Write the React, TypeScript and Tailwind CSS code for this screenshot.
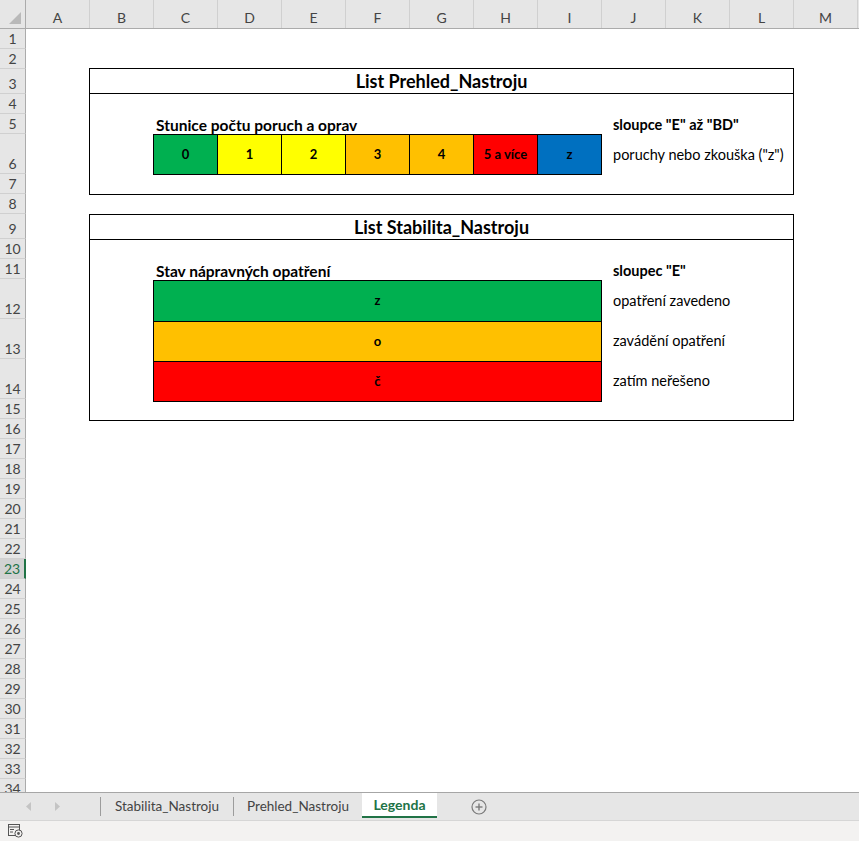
const cols = ['A', 'B', 'C', 'D', 'E', 'F', 'G', 'H', 'I', 'J', 'K', 'L', 'M'];

const heightClass: Record<number, string> = {
  20: 'h-[20px]',
  25: 'h-[25px]',
  40: 'h-[40px]',
};

const rowHeights = [20, 20, 25, 20, 20, 40, 20, 20, 25, 20, 20, 40, 40, 40, ...Array(20).fill(20)];

const scale = [
  { label: '0', color: 'bg-[#00b050]' },
  { label: '1', color: 'bg-[#ffff00]' },
  { label: '2', color: 'bg-[#ffff00]' },
  { label: '3', color: 'bg-[#ffc000]' },
  { label: '4', color: 'bg-[#ffc000]' },
  { label: '5 a více', color: 'bg-[#ff0000]' },
  { label: 'z', color: 'bg-[#0070c0]' },
];

const stav = [
  { label: 'z', color: 'bg-[#00b050]', note: 'opatření zavedeno' },
  { label: 'o', color: 'bg-[#ffc000]', note: 'zavádění opatření' },
  { label: 'č', color: 'bg-[#ff0000]', note: 'zatím neřešeno' },
];

function Corner() {
  return (
    <div className="w-[26px] h-full border-r border-[#ababab] flex items-end justify-end shrink-0">
      <svg width="14" height="14" viewBox="0 0 14 14" className="mb-[3px] mr-[3px]">
        <polygon points="13,1 13,13 1,13" fill="#b9b9b9" />
      </svg>
    </div>
  );
}

export default function App() {
  return (
    <div className="w-[859px] h-[841px] overflow-hidden flex flex-col bg-white font-['Lato',sans-serif] text-black">
      {/* column headers */}
      <div className="h-[29px] flex bg-[#e6e6e6] border-b border-[#ababab] shrink-0">
        <Corner />
        {cols.map((c) => (
          <div
            key={c}
            className="w-[64px] shrink-0 border-r border-[#d0d0d0] flex items-end justify-center pb-[2px] text-[14px] leading-[16px] text-[#444]"
          >
            {c}
          </div>
        ))}
      </div>

      {/* sheet */}
      <div className="flex-1 flex overflow-hidden">
        <div className="w-[26px] shrink-0 bg-[#e6e6e6] flex flex-col">
          {rowHeights.map((h, i) => {
            const selected = i + 1 === 23;
            return (
              <div
                key={i}
                className={`${heightClass[h]} shrink-0 flex items-end justify-center pb-[1px] border-b border-[#d0d0d0] text-[14px] leading-[16px] ${
                  selected
                    ? 'bg-[#d2d2d2] text-[#217346] border-r-2 border-r-[#217346]'
                    : 'text-[#444] border-r border-r-[#ababab]'
                }`}
              >
                {i + 1}
              </div>
            );
          })}
        </div>

        <div className="flex-1 pt-[39px] pl-[63px]">
          {/* List Prehled_Nastroju */}
          <div className="w-[705px] border border-black">
            <div className="h-[25px] border-b border-black flex items-center justify-center text-[18px] font-bold">
              List Prehled_Nastroju
            </div>
            <div className="h-[100px] pl-[63px] pt-[20px]">
              <div className="h-[20px] flex items-end font-bold leading-[18px]">
                <span className="w-[460px] pl-[3px] text-[15.5px]">Stunice počtu poruch a oprav</span>
                <span className="text-[14.5px]">sloupce "E" až "BD"</span>
              </div>
              <div className="flex items-center">
                <div className="flex border-l border-y border-black h-[41px]">
                  {scale.map((s) => (
                    <div
                      key={s.label}
                      className={`w-[64px] border-r border-black flex items-center justify-center text-[13px] font-bold ${s.color}`}
                    >
                      {s.label}
                    </div>
                  ))}
                </div>
                <span className="ml-[11px] text-[14.5px]">poruchy nebo zkouška ("z")</span>
              </div>
            </div>
          </div>

          {/* List Stabilita_Nastroju */}
          <div className="w-[705px] border border-black mt-[19px]">
            <div className="h-[25px] border-b border-black flex items-center justify-center text-[18px] font-bold">
              List Stabilita_Nastroju
            </div>
            <div className="h-[180px] pl-[63px] pt-[20px]">
              <div className="h-[20px] flex items-end font-bold leading-[18px]">
                <span className="w-[460px] pl-[3px] text-[15.5px]">Stav nápravných opatření</span>
                <span className="text-[14.5px]">sloupec "E"</span>
              </div>
              <div className="flex">
                <div className="w-[449px] border border-black">
                  {stav.map((s, i) => (
                    <div
                      key={s.label}
                      className={`h-[40px] flex items-center justify-center text-[13px] font-bold ${s.color} ${
                        i > 0 ? 'border-t border-black' : ''
                      }`}
                    >
                      {s.label}
                    </div>
                  ))}
                </div>
                <div className="pt-[1px]">
                  {stav.map((s) => (
                    <div key={s.note} className="h-[40px] flex items-center pl-[11px] text-[14.5px]">
                      {s.note}
                    </div>
                  ))}
                </div>
              </div>
            </div>
          </div>
        </div>
      </div>

      {/* sheet tabs */}
      <div className="h-[28px] shrink-0 bg-[#e6e6e6] border-t border-[#a6a6a6] flex items-stretch text-[13.5px] text-[#444]">
        <div className="w-[100px] flex items-center">
          <svg width="6" height="9" viewBox="0 0 6 9" className="ml-[26px]">
            <polygon points="5,0 5,9 0,4.5" fill="#c4c4c4" />
          </svg>
          <svg width="6" height="9" viewBox="0 0 6 9" className="ml-[23px]">
            <polygon points="0,0 0,9 5,4.5" fill="#c4c4c4" />
          </svg>
        </div>
        <div className="w-px my-[4px] bg-[#9c9c9c]" />
        <div className="w-[132px] flex items-center justify-center">Stabilita_Nastroju</div>
        <div className="w-px my-[4px] bg-[#9c9c9c]" />
        <div className="w-[128px] flex items-center justify-center">Prehled_Nastroju</div>
        <div className="w-[75px] mb-[2px] bg-white border-b-2 border-[#217346] flex items-center justify-center font-bold text-[14px] text-[#217346]">
          Legenda
        </div>
        <div className="flex items-center ml-[34px]">
          <svg width="16" height="16" viewBox="0 0 16 16">
            <circle cx="8" cy="8" r="7" fill="none" stroke="#7a7a7a" strokeWidth="1.2" />
            <line x1="4.5" y1="8" x2="11.5" y2="8" stroke="#7a7a7a" strokeWidth="1.4" />
            <line x1="8" y1="4.5" x2="8" y2="11.5" stroke="#7a7a7a" strokeWidth="1.4" />
          </svg>
        </div>
      </div>

      {/* status bar */}
      <div className="h-[21px] shrink-0 bg-[#f3f2f1] border-t border-[#d6d6d6] flex items-center pl-[8px]">
        <svg width="15" height="14" viewBox="0 0 15 14">
          <rect x="0.5" y="0.5" width="11" height="11" fill="none" stroke="#555" />
          <line x1="0.5" y1="3" x2="11.5" y2="3" stroke="#555" />
          <line x1="2" y1="5.5" x2="6" y2="5.5" stroke="#555" />
          <line x1="2" y1="8" x2="5" y2="8" stroke="#555" />
          <circle cx="10.5" cy="9.5" r="3.6" fill="#f3f2f1" stroke="#555" />
          <circle cx="10.5" cy="9.5" r="1.4" fill="#555" />
        </svg>
      </div>
    </div>
  );
}
